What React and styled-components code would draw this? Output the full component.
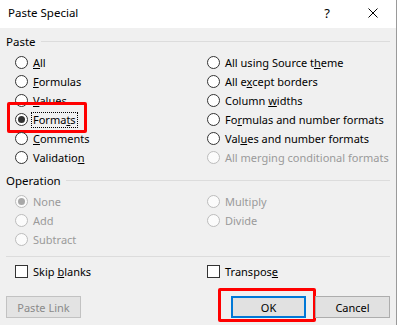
import React from 'react';
import styled, { createGlobalStyle } from 'styled-components';

const Global = createGlobalStyle`
  html, body { margin: 0; padding: 0; background: #f0f0f0; }
  body {
    font-family: "Segoe UI", "Noto Sans", sans-serif;
    font-size: 11px;
    color: #000;
  }
  * { box-sizing: border-box; }
`;

const Dialog = styled.div`
  width: 397px;
  height: 325px;
  border-right: 1px solid #9a9a9a;
  background: #f0f0f0;
  display: flex;
  flex-direction: column;
  overflow: hidden;
`;

const TitleBar = styled.div`
  height: 28px;
  background: #fff;
  display: flex;
  align-items: center;
  padding: 0 0 3px 8px;
`;

const Title = styled.div`
  flex: 1;
  line-height: 16px;
  font-size: 11.5px;
`;

const CaptionButton = styled.div`
  width: 46px;
  height: 24px;
  display: flex;
  align-items: center;
  justify-content: center;
  font-size: 13px;
  line-height: 16px;
`;

const Content = styled.div`
  flex: 1;
  padding: 6px 6px 0 6px;
  display: flex;
  flex-direction: column;
`;

const GroupHeader = styled.div`
  display: flex;
  align-items: center;
  height: 16px;
  line-height: 16px;
  font-size: 11.5px;
  margin-top: ${p => p.$mt || 0}px;
`;

const Rule = styled.div`
  flex: 1;
  height: 1px;
  background: #dcdcdc;
  margin: -2px 0 0 ${p => p.$ml || 5}px;
`;

const OptionGrid = styled.div`
  display: grid;
  grid-template-columns: 192px 1fr;
  grid-auto-rows: 19px;
  margin: ${p => p.$mt ?? 3}px 0 0 9px;
`;

const Item = styled.label`
  position: relative;
  display: flex;
  align-items: center;
  gap: 4px;
  color: ${p => (p.$disabled ? '#9a9a9a' : '#000')};
  white-space: nowrap;
`;

const Circle = styled.span`
  position: relative;
  flex: none;
  width: 13px;
  height: 13px;
  border-radius: 50%;
  border: 1px solid ${p => (p.$disabled ? '#bcbcbc' : '#333')};
  background: ${p => (p.$disabled ? '#fbfbfb' : '#fff')};
  &::after {
    content: '';
    display: ${p => (p.$checked ? 'block' : 'none')};
    position: absolute;
    left: 2px;
    top: 2px;
    width: 7px;
    height: 7px;
    border-radius: 50%;
    background: ${p => (p.$disabled ? '#a8a8a8' : '#333')};
  }
`;

const Box = styled.span`
  flex: none;
  width: 13px;
  height: 13px;
  border: 1px solid #333;
  background: #fff;
`;

const Text = styled.span`
  line-height: 14px;
  padding: 0 1px;
  margin-left: -1px;
  border: 1px ${p => (p.$focused ? 'dotted #000' : 'solid transparent')};
`;

const Highlight = styled.span`
  position: absolute;
  left: ${p => p.$l}px;
  top: ${p => p.$t}px;
  width: ${p => p.$w}px;
  height: ${p => p.$h}px;
  border: 3px solid #ff0000;
  border-radius: 2px;
  pointer-events: none;
`;

const Separator = styled.div`
  height: 1px;
  background: #dcdcdc;
  margin-top: 7px;
`;

const ButtonRow = styled.div`
  display: flex;
  align-items: center;
  margin-top: 15px;
`;

const Spacer = styled.div`
  flex: 1;
`;

const BtnWrap = styled.div`
  position: relative;
  margin-left: ${p => p.$ml || 0}px;
`;

const Button = styled.div`
  width: 75px;
  height: 22px;
  display: flex;
  align-items: center;
  justify-content: center;
  background: ${p => (p.$disabled ? '#e3e3e3' : '#e1e1e1')};
  border: ${p => (p.$default ? '2px solid #0078d7' : `1px solid ${p.$disabled ? '#c2c2c2' : '#adadad'}`)};
  color: ${p => (p.$disabled ? '#8a8a8a' : '#000')};
`;

const Radio = ({ children, checked, disabled, focused, highlight }) => (
  <Item $disabled={disabled}>
    <Circle $checked={checked} $disabled={disabled} />
    <Text $focused={focused}>{children}</Text>
    {highlight && <Highlight $l={-8} $t={-8} $w={80} $h={31} />}
  </Item>
);

const Check = ({ children }) => (
  <Item>
    <Box />
    <Text>{children}</Text>
  </Item>
);

export default function App() {
  return (
    <>
      <Global />
      <Dialog>
        <TitleBar>
          <Title>Paste Special</Title>
          <CaptionButton>?</CaptionButton>
          <CaptionButton>
            <svg width="10" height="10" viewBox="0 0 10 10">
              <path d="M0.5 0.5 L9.5 9.5 M9.5 0.5 L0.5 9.5" stroke="#000" strokeWidth="1" fill="none" />
            </svg>
          </CaptionButton>
        </TitleBar>
        <Content>
          <GroupHeader>
            Paste
            <Rule $ml={5} />
          </GroupHeader>
          <OptionGrid>
            <Radio><u>A</u>ll</Radio>
            <Radio>All using Source t<u>h</u>eme</Radio>
            <Radio><u>F</u>ormulas</Radio>
            <Radio>All e<u>x</u>cept borders</Radio>
            <Radio><u>V</u>alues</Radio>
            <Radio>Column <u>w</u>idths</Radio>
            <Radio checked focused highlight>Forma<u>t</u>s</Radio>
            <Radio>Fo<u>r</u>mulas and number formats</Radio>
            <Radio><u>C</u>omments</Radio>
            <Radio>Val<u>u</u>es and number formats</Radio>
            <Radio>Validatio<u>n</u></Radio>
            <Radio disabled>All merging conditional formats</Radio>
          </OptionGrid>
          <GroupHeader $mt={6}>
            Operation
            <Rule $ml={5} />
          </GroupHeader>
          <OptionGrid>
            <Radio disabled checked>None</Radio>
            <Radio disabled>Multiply</Radio>
            <Radio disabled>Add</Radio>
            <Radio disabled>Divide</Radio>
            <Radio disabled>Subtract</Radio>
          </OptionGrid>
          <Separator />
          <OptionGrid $mt={5}>
            <Check>Skip <u>b</u>lanks</Check>
            <Check>Transpos<u>e</u></Check>
          </OptionGrid>
          <ButtonRow>
            <Button $disabled>Paste Link</Button>
            <Spacer />
            <BtnWrap>
              <Button $default>OK</Button>
              <Highlight $l={-13} $t={-8} $w={98} $h={34} />
            </BtnWrap>
            <BtnWrap $ml={9}>
              <Button>Cancel</Button>
            </BtnWrap>
          </ButtonRow>
        </Content>
      </Dialog>
    </>
  );
}
